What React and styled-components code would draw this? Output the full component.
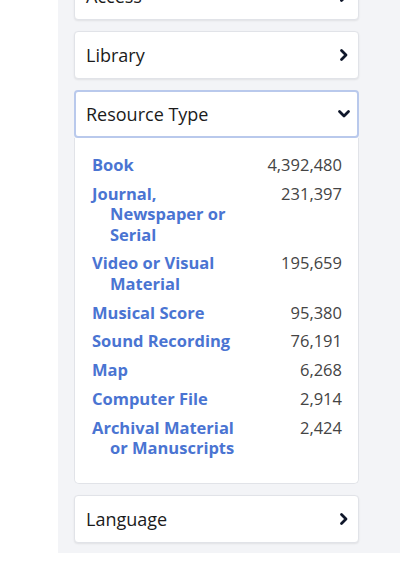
import styled, { createGlobalStyle } from "styled-components";

const GlobalStyle = createGlobalStyle`
  html, body {
    margin: 0;
    padding: 0;
    background: #ffffff;
    font-family: "Open Sans", "Noto Sans", Arial, sans-serif;
  }
`;

const Page = styled.div`
  width: 400px;
  height: 563px;
  overflow: hidden;
  padding-left: 58px;
  box-sizing: border-box;
`;

const Panel = styled.div`
  background: #f3f4f7;
  padding: 0 41px 10px 16px;
  display: flex;
  flex-direction: column;
  gap: 11px;
  margin-top: -28px;
`;

const Facet = styled.div`
  display: flex;
  flex-direction: column;
`;

const Header = styled.div`
  height: 48px;
  box-sizing: border-box;
  display: flex;
  align-items: center;
  justify-content: space-between;
  background: #ffffff;
  border: ${(p) => (p.$open ? "2px solid #b9c9ec" : "1px solid #e1e3e8")};
  padding: ${(p) => (p.$open ? "0 6px 0 10px" : "0 7px 0 11px")};
  border-radius: 4px;
  box-shadow: ${(p) => (p.$open ? "none" : "0 1px 2px rgba(0, 0, 0, 0.08)")};
  font-size: 18px;
  color: #1b1b1b;
  cursor: pointer;
`;

const Body = styled.div`
  background: #ffffff;
  border: 1px solid #e1e3e8;
  border-top: none;
  border-radius: 0 0 5px 5px;
  padding: 17px 16px 24px 17px;
  display: flex;
  flex-direction: column;
  gap: 8.4px;
`;

const Row = styled.div`
  display: flex;
  justify-content: space-between;
  align-items: flex-start;
  line-height: 20.4px;
  font-size: 16.5px;
`;

const Label = styled.a`
  box-sizing: border-box;
  max-width: 152px;
  padding-left: 18px;
  text-indent: -18px;
  color: #4a74d2;
  font-weight: 700;
  text-decoration: none;
`;

const Count = styled.span`
  color: #444444;
`;

const Chevron = ({ down }) => (
  <svg width="14" height="14" viewBox="0 0 14 14">
    <path
      d={down ? "M2.5 4.5 L7 9 L11.5 4.5" : "M4.5 2.5 L9 7 L4.5 11.5"}
      fill="none"
      stroke="#0f172a"
      strokeWidth="2.8"
      strokeLinecap="round"
      strokeLinejoin="round"
    />
  </svg>
);

const types = [
  ["Book", "4,392,480"],
  ["Journal, Newspaper or Serial", "231,397"],
  ["Video or Visual Material", "195,659"],
  ["Musical Score", "95,380"],
  ["Sound Recording", "76,191"],
  ["Map", "6,268"],
  ["Computer File", "2,914"],
  ["Archival Material or Manuscripts", "2,424"],
];

export default function App() {
  return (
    <Page>
      <GlobalStyle />
      <Panel>
        <Facet>
          <Header>
            Access
            <Chevron />
          </Header>
        </Facet>
        <Facet>
          <Header>
            Library
            <Chevron />
          </Header>
        </Facet>
        <Facet>
          <Header $open>
            Resource Type
            <Chevron down />
          </Header>
          <Body>
            {types.map(([name, count]) => (
              <Row key={name}>
                <Label href="#">{name}</Label>
                <Count>{count}</Count>
              </Row>
            ))}
          </Body>
        </Facet>
        <Facet>
          <Header>
            Language
            <Chevron />
          </Header>
        </Facet>
      </Panel>
    </Page>
  );
}
